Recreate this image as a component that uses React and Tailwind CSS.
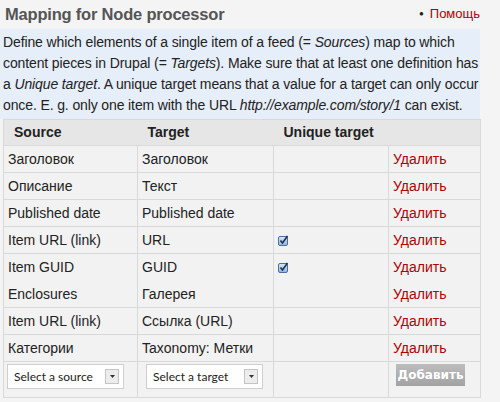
import React from 'react';

const rows = [
  { source: 'Заголовок', target: 'Заголовок', unique: false },
  { source: 'Описание', target: 'Текст', unique: false },
  { source: 'Published date', target: 'Published date', unique: false },
  { source: 'Item URL (link)', target: 'URL', unique: true },
  { source: 'Item GUID', target: 'GUID', unique: true, joinNext: true },
  { source: 'Enclosures', target: 'Галерея', unique: false },
  { source: 'Item URL (link)', target: 'Ссылка (URL)', unique: false },
  { source: 'Категории', target: 'Taxonomy: Метки', unique: false },
];

const CheckMark = () => (
  <svg width="11" height="11" viewBox="0 0 11 11" className="block">
    <defs>
      <linearGradient id="cb" x1="0" y1="0" x2="0" y2="1">
        <stop offset="0" stopColor="#dbe8f8" />
        <stop offset="1" stopColor="#8fb3e0" />
      </linearGradient>
    </defs>
    <rect x="0.5" y="1.5" width="9" height="9" rx="1.5" fill="url(#cb)" stroke="#4d6f9e" />
    <path d="M2.5 5.5 L4.5 8 L9.5 1" fill="none" stroke="#1b2f52" strokeWidth="1.6" />
  </svg>
);

const FakeSelect = ({ label, width }) => (
  <div
    className="flex h-[25px] items-center justify-between border border-[#cfcfcf] bg-white pl-[6px] pr-[4px] text-[12px] leading-none text-[#222] font-['Lato',sans-serif]"
    style={{ width }}
  >
    <span>{label}</span>
    <span className="flex h-[15px] w-[14px] items-center justify-center border border-[#c4c4c4] bg-[#ececec]">
      <svg width="5" height="3" viewBox="0 0 5 3">
        <path d="M0 0 H5 L2.5 3 Z" fill="#333" />
      </svg>
    </span>
  </div>
);

export default function App() {
  const cell = 'border-x border-[#d9d9d9] px-[4px] align-top';
  return (
    <div className="h-[402px] w-[500px] overflow-hidden bg-[#f4f4f4] font-['Liberation_Sans',Arial,sans-serif] text-[14px] text-[#222]">
      <div className="flex items-start justify-between pl-[5px] pr-[20px]">
        <h2 className="pt-[2px] text-[16.5px] font-bold leading-[24px] tracking-[-0.2px] text-[#555]">Mapping for Node processor</h2>
        <div className="flex items-center gap-[6px] pt-[4px] text-[13px] leading-[20px] text-[#b30000]">
          <span className="text-[8px] text-[#222]">●</span>
          <span>Помощь</span>
        </div>
      </div>

      <div className="mt-[3px] w-[480px] bg-[#e6eef9] py-[3px] pl-[3px] pr-0 leading-[21px] tracking-[-0.12px]">
        Define which elements of a single item of a feed (= <em>Sources</em>) map to which content pieces in Drupal (= <em>Targets</em>). Make sure that at least one definition has a <em>Unique target</em>. A unique target means that a value for a target can only occur once. E. g. only one item with the URL <em>http://example.com/story/1</em> can exist.
      </div>

      <table className="ml-[3px] w-[477px] table-fixed border-collapse border border-[#d9d9d9] bg-[#f2f2f2]">
        <colgroup>
          <col className="w-[134px]" />
          <col className="w-[136px]" />
          <col className="w-[115px]" />
          <col className="w-[92px]" />
        </colgroup>
        <thead>
          <tr className="h-[26px] bg-[#e6e6e6] text-left font-bold leading-[25px]">
            <th className="pl-[10px] pr-[4px] font-bold">Source</th>
            <th className="px-[10px] font-bold">Target</th>
            <th className="px-[10px] font-bold">Unique target</th>
            <th></th>
          </tr>
        </thead>
        <tbody>
          {rows.map((r, i) => (
            <tr
              key={i}
              className={`h-[27px] leading-[26px] ${r.joinNext ? '' : 'border-b border-[#d9d9d9]'} ${i === 0 ? 'border-t border-[#d9d9d9]' : ''}`}
            >
              <td className={cell}>{r.source}</td>
              <td className={cell}>{r.target}</td>
              <td className={`${cell} pt-[8px] leading-none`}>
                {r.unique && <CheckMark />}
              </td>
              <td className={`${cell} text-[#b30000]`}>Удалить</td>
            </tr>
          ))}
          <tr className="h-[36px]">
            <td className={`${cell} align-middle pl-[3px] pt-[2px]`}>
              <FakeSelect label="Select a source" width="117px" />
            </td>
            <td className={`${cell} align-middle pl-[8px] pt-[2px]`}>
              <FakeSelect label="Select a target" width="117px" />
            </td>
            <td className={cell}></td>
            <td className={`${cell} align-middle pl-[7px] pt-[2px]`}>
              <button className="h-[22px] w-[69px] bg-gradient-to-b from-[#bdbdbd] to-[#a2a2a2] text-[12px] font-bold leading-none text-white font-['DejaVu_Sans',sans-serif]">
                Добавить
              </button>
            </td>
          </tr>
        </tbody>
      </table>
    </div>
  );
}
